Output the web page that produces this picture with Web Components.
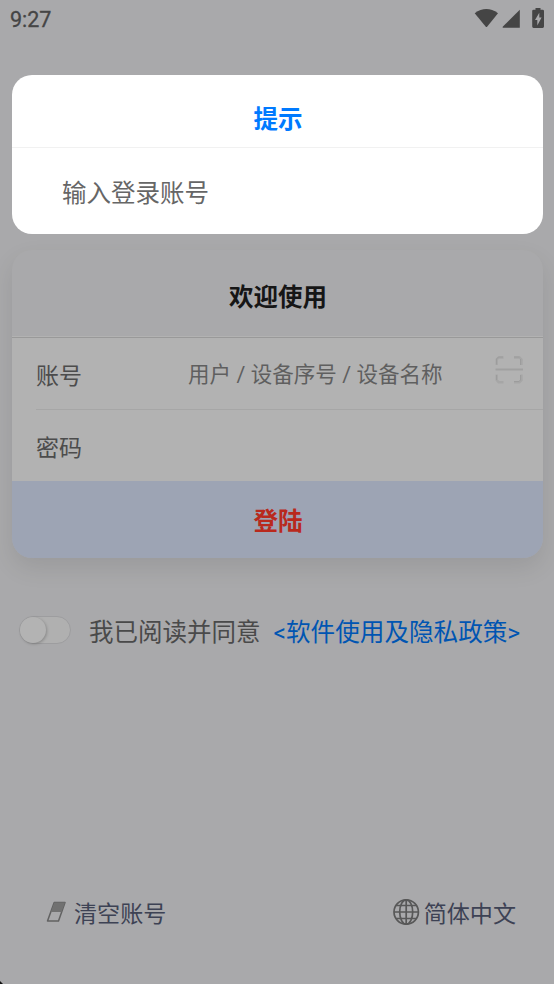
<!DOCTYPE html>
<html lang="zh-CN">
<head>
<meta charset="utf-8">
<title>登陆</title>
<style>
html,body{margin:0;height:100%;overflow:hidden}
body{background:#a9a9ab;font-family:Roboto,"Noto Sans CJK SC",sans-serif}
</style>
</head>
<body>
<login-screen></login-screen>
<script>
const define = (name, html) => customElements.define(name, class extends HTMLElement {
  constructor() {
    super();
    const t = document.createElement('template');
    t.innerHTML = html;
    this.attachShadow({mode: 'open'}).append(t.content.cloneNode(true));
  }
});

define('status-bar', `
<style>
:host{display:flex;height:36px;padding:0 9px 0 10px;box-sizing:border-box;justify-content:space-between;color:#454545}
.time{line-height:39px;font-size:21.5px;-webkit-text-stroke:.3px #454545}
svg{display:block;fill:#454545}
</style>
<span class="time"><slot></slot></span>
<svg width="72" height="36" viewBox="473 0 72 36">
  <path d="M474.7 13.2Q486.3 4.8 498 13.2L486.9 27H486Z"/>
  <path d="M519.8 9.7V27.7H502.7V26.8Z"/>
  <path fill-rule="evenodd" d="M535.5 8H540.5V9.7H542.6Q544 9.7 544 11V26.5Q544 27.9 542.6 27.9H533.6Q532.2 27.9 532.2 26.5V11Q532.2 9.7 533.6 9.7H535.5ZM539.3 12.7 535 19.9H537.3V25.6L541.6 17.6H539.3Z"/>
</svg>`);

define('prompt-panel', `
<style>
:host{display:block;height:159px;border-radius:20px;background:#fff;overflow:hidden}
.head{height:72px;line-height:89px;border-bottom:1px solid #f1f1f1;color:#007aff;font-weight:700;font-size:24.5px;text-align:center;text-indent:1px}
.body{height:86px;line-height:92px;padding-left:50px;color:#666;font-size:24.5px}
</style>
<div class="head"><slot name="title"></slot></div>
<div class="body"><slot></slot></div>`);

define('scan-icon', `
<style>:host{display:block;width:28px;height:28px}svg{display:block}</style>
<svg width="28" height="28" fill="none" stroke-width="2.4">
  <path stroke="#a6a6a6" d="M1.7 9V3.5L3.7 1.5H8.5M19 1.5H24.5L26.5 3.5V9M1.7 18.5V24L3.7 26.3H8.5M19 26.3H24.5L26.5 24V18.5"/>
  <path stroke="#9c9c9c" stroke-width="1" d="M1.5 8.5V3L3.5 1H8M19 1H24.5M25.5 3V9M1.5 19V24M19 25.5H24L25.5 24V19"/>
  <path stroke="#a0a0a0" stroke-width="2" d="M.5 13.5H28"/>
</svg>`);

define('form-row', `
<style>
:host{display:flex;height:72px;margin-left:24px;box-sizing:border-box;border-bottom:1px solid #a6a6a6;color:#4c4c4c}
:host([last]){height:71px;border-bottom:0}
.label{width:152px;font-size:23px;line-height:77px}
.hint{flex:1;font-size:21.55px;line-height:73px;color:#5f5f5f;white-space:pre}
.icon{padding:18px 20px 0 0}
</style>
<div class="label"><slot name="label"></slot></div>
<div class="hint"><slot></slot></div>
<div class="icon"><slot name="icon"></slot></div>`);

define('login-card', `
<style>
:host{display:block;height:308px;border-radius:20px;background:#a9a9ab;overflow:hidden;box-shadow:0 10px 24px rgba(0,0,0,.09)}
.head{height:87px;line-height:96px;border-bottom:1px solid #999;box-shadow:inset 0 -1px #b2b2b2;color:#161616;font-weight:700;font-size:24.5px;text-align:center;text-indent:1px}
.rows{background:#b2b2b2}
.action{height:77px;line-height:81px;background:#9da4b4;color:#b9291d;font-weight:700;font-size:24.5px;text-align:center;text-indent:1px}
</style>
<div class="head"><slot name="title"></slot></div>
<div class="rows"><slot></slot></div>
<div class="action"><slot name="action"></slot></div>`);

define('toggle-switch', `
<style>
:host{display:block;width:52px;height:28px;box-sizing:border-box;border:1px solid #9d9d9f;border-radius:14px;background:#b0b0b0;margin-bottom:2px}
.knob{width:26px;height:26px;border-radius:50%;background:#b3b3b3;box-shadow:1px 1px 3px rgba(0,0,0,.22)}
</style>
<div class="knob"></div>`);

define('consent-row', `
<style>
:host{display:flex;align-items:center;height:40px;padding-left:19px;font-size:24.5px;line-height:40px;color:#4a4a4a;white-space:nowrap}
span{padding-top:4px}
.text{margin-left:18px}.link{margin-left:13px;color:#0055b2;font-size:24.6px}
</style>
<toggle-switch></toggle-switch>
<span class="text"><slot></slot></span>
<span class="link"><slot name="link"></slot></span>`);

define('footer-action', `
<style>:host{display:flex;align-items:center;height:40px;font-size:23.1px;color:#3d4254}span{padding-top:3px;line-height:40px}</style>
<slot name="icon"></slot><span><slot></slot></span>`);

define('eraser-icon', `
<style>:host{display:block;width:28px;height:22px;margin-bottom:2px}svg{display:block}</style>
<svg width="28" height="22">
  <path d="M8.2 1.5H19L12.5 20H1.5Z" fill="none" stroke="#626262" stroke-width="1.5" stroke-linejoin="round"/>
  <path d="M8.4 1.5H19L15.4 11H4.8Z" fill="#717171"/>
</svg>`);

define('globe-icon', `
<style>:host{display:block;width:31px;height:28px;margin-bottom:2px}svg{display:block}</style>
<svg width="31" height="28" fill="none" stroke="#585858" stroke-width="1.7">
  <circle cx="13.2" cy="14" r="12.2"/><ellipse cx="13.2" cy="14" rx="6.5" ry="12.2"/>
  <path d="M13.2 1.8V26.2M1 14H25.4M3.2 7.5H23.2M3.2 20.5H23.2"/>
</svg>`);

define('login-screen', `
<style>
:host{display:flex;flex-direction:column;position:relative;height:984px;background:#a9a9ab}
prompt-panel{margin:39px 11px 0 12px;flex:none;position:relative;z-index:1}
login-card{margin:16px 11px 0 12px;flex:none}
consent-row{margin-top:53px}
footer{display:flex;justify-content:space-between;margin-top:auto;padding:0 38px 51px 46px}
.corner{position:absolute;left:0;bottom:0}
</style>
<status-bar>9:27</status-bar>
<prompt-panel><span slot="title">提示</span>输入登录账号</prompt-panel>
<login-card>
  <span slot="title">欢迎使用</span>
  <form-row><span slot="label">账号</span>用户 / 设备序号 / 设备名称<scan-icon slot="icon"></scan-icon></form-row>
  <form-row last><span slot="label">密码</span></form-row>
  <span slot="action">登陆</span>
</login-card>
<consent-row>我已阅读并同意<span slot="link">&lt;软件使用及隐私政策&gt;</span></consent-row>
<footer>
  <footer-action><eraser-icon slot="icon"></eraser-icon>清空账号</footer-action>
  <footer-action><globe-icon slot="icon"></globe-icon>简体中文</footer-action>
</footer>
<svg class="corner" width="4" height="4"><path d="M0 1 3 4H0Z" fill="#111"/></svg>`);
</script>
</body>
</html>
